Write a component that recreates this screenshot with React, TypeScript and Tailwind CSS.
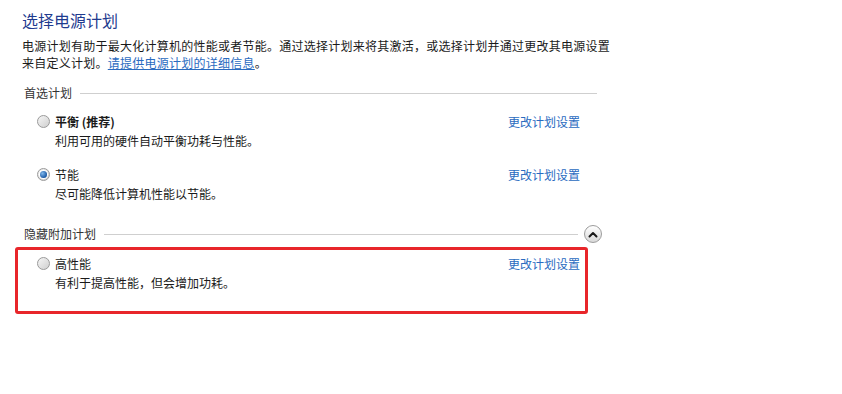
import React from 'react';

const font = { fontFamily: '"Microsoft YaHei", "Noto Sans CJK SC", "Noto Sans", sans-serif' };

const Radio: React.FC<{ checked?: boolean }> = ({ checked }) => (
  <span className="w-[13px] h-[13px] rounded-full border border-[#9a9a9a] bg-gradient-to-br from-[#f6f6f6] to-[#cfcfcf] flex items-center justify-center shrink-0">
    {checked && (
      <span className="w-[7px] h-[7px] rounded-full bg-[radial-gradient(circle_at_35%_35%,#7fb6ea,#1c5aa6_70%)] ring-1 ring-white" />
    )}
  </span>
);

interface PlanRowProps {
  name: React.ReactNode;
  desc: string;
  checked?: boolean;
}

const PlanRow: React.FC<PlanRowProps> = ({ name, desc, checked }) => (
  <div className="flex justify-between">
    <div className="flex flex-col">
      <div className="flex items-center gap-[5px] h-[19px] ml-[-18px]">
        <Radio checked={checked} />
        <span className="text-[12px] leading-[19px] text-[#1a1a1a]">{name}</span>
      </div>
      <span className="text-[12px] leading-[19px] text-[#1a1a1a]">{desc}</span>
    </div>
    <a className="text-[12px] leading-[19px] h-[19px] text-[#2a6bbf] cursor-pointer">更改计划设置</a>
  </div>
);

const SectionHeader: React.FC<{ title: string; children?: React.ReactNode }> = ({ title, children }) => (
  <div className="flex items-center h-[16px] ml-[2px]">
    <span className="text-[12px] leading-[16px] text-[#333333]">{title}</span>
    <div className="flex-1 h-px bg-[#cfcfcf] ml-[8px]" />
    {children}
  </div>
);

export default function App() {
  return (
    <div className="w-[842px] h-[394px] bg-white pl-[22px] pt-[10px]" style={font}>
      <h1 className="text-[16px] leading-[20px] text-[#1f3b8f] font-normal">选择电源计划</h1>
      <p className="mt-[7px] w-[590px] text-[12px] leading-[17px] text-[#1a1a1a] tracking-[0.25px]">
        电源计划有助于最大化计算机的性能或者节能。通过选择计划来将其激活，或选择计划并通过更改其电源设置来自定义计划。
        <a className="text-[#2a6bbf] underline cursor-pointer">请提供电源计划的详细信息</a>。
      </p>

      <div className="w-[575px] mt-[14px]">
        <SectionHeader title="首选计划" />
      </div>

      <div className="w-[558px] pl-[33px] mt-[11px] flex flex-col gap-[15px]">
        <PlanRow name={<b className="font-bold">平衡 (推荐)</b>} desc="利用可用的硬件自动平衡功耗与性能。" />
        <PlanRow name="节能" desc="尽可能降低计算机性能以节能。" checked />
      </div>

      <div className="w-[580px] mt-[23px]">
        <SectionHeader title="隐藏附加计划">
          <span className="ml-[6px] w-[18px] h-[18px] rounded-full border border-[#9c9c9c] bg-gradient-to-b from-[#ffffff] to-[#d9d9d9] flex items-center justify-center">
            <svg width="10" height="7" viewBox="0 0 10 7" fill="none">
              <path d="M1.5 5.5 L5 2 L8.5 5.5" stroke="#1a1a1a" strokeWidth="2" strokeLinecap="round" strokeLinejoin="round" />
            </svg>
          </span>
        </SectionHeader>
      </div>

      <div className="ml-[-7px] w-[573px] mt-[5px] border-[3px] border-[#e8262a] rounded-[3px] pl-[37px] pr-[5px] pt-[4px] pb-[19px]">
        <PlanRow name="高性能" desc="有利于提高性能，但会增加功耗。" />
      </div>
    </div>
  );
}
